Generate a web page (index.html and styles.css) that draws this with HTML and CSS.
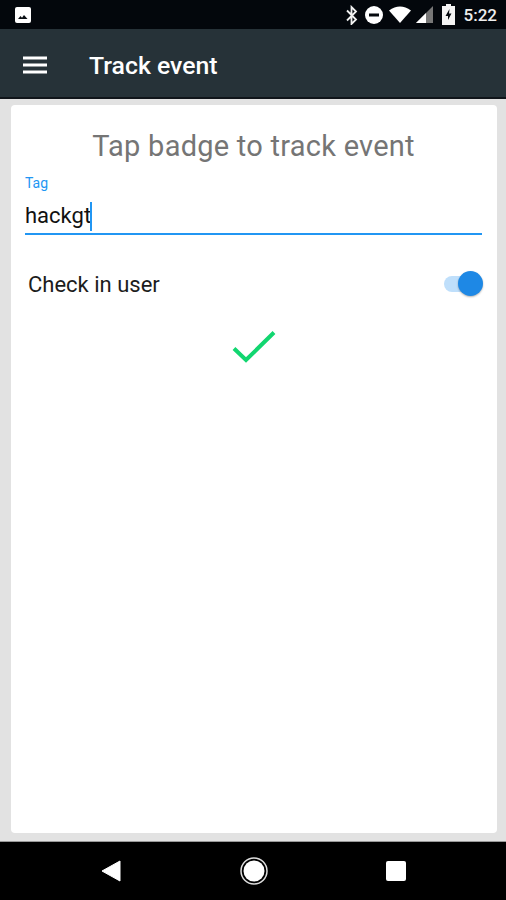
FILE: index.html
```html
<!DOCTYPE html>
<html lang="en">
<head>
<meta charset="utf-8">
<title>Track event</title>
<link rel="stylesheet" href="styles.css">
</head>
<body>
<div class="phone">
  <div class="statusbar">
    <svg class="photo-icon" width="18" height="18" viewBox="0 0 18 18"><rect x="1" y="1" width="16" height="16" rx="2" fill="#fff"/><path d="M4 13l2.5-3 1.5 1.8 2-2.8 3.5 4z" fill="#0a0f14"/></svg>
    <div class="status-right">
      <svg width="14" height="20" viewBox="0 0 14 20"><path d="M2 5.5l9 9-4.5 4.500v-17l4.500 4.500-9 9" fill="none" stroke="#f0f0f0" stroke-width="1.800"/></svg>
      <svg width="20" height="20" viewBox="0 0 20 20"><circle cx="10" cy="10" r="9" fill="#fff"/><rect x="5" y="8.500" width="10" height="3" fill="#05090e"/></svg>
      <svg width="22" height="18" viewBox="0 0 22 18"><path d="M0 4.500Q11-3.500 22 4.500L11 17z" fill="#fff"/></svg>
      <svg width="17" height="18" viewBox="0 0 17 18"><path d="M0 17L17 0v17z" fill="#777"/><path d="M0 17L10 7v10z" fill="#fff"/></svg>
      <svg class="batt" width="13" height="21" viewBox="0 0 13 21"><path d="M4 0h5v2h4v19H0V2h4z" fill="#f4f4f4"/><path d="M7.500 5L3.500 12h2.500v4l3.500-6.500H7z" fill="#05090e"/></svg>
      <span class="clock">5:22</span>
    </div>
  </div>
  <header class="appbar">
    <svg class="menu" width="24" height="18" viewBox="0 0 24 18"><path d="M0 2h24M0 9h24M0 16h24" stroke="#fff" stroke-width="3"/></svg>
    <h1 class="title">Track event</h1>
  </header>
  <main class="content">
    <section class="card">
      <h2 class="heading">Tap badge to track event</h2>
      <div class="field">
        <label class="field-label">Tag</label>
        <div class="field-value">hackgt<span class="caret"></span></div>
      </div>
      <div class="toggle-row">
        <span class="toggle-label">Check in user</span>
        <span class="switch"><span class="track"></span><span class="thumb"></span></span>
      </div>
      <div class="check-wrap">
        <svg width="44" height="34" viewBox="0 0 44 34"><path d="M2 18.500L14 30 42 2.500" fill="none" stroke="#12d670" stroke-width="4"/></svg>
      </div>
    </section>
  </main>
  <nav class="navbar">
    <svg width="20" height="22" viewBox="0 0 20 22"><path d="M19 1v20L1 11z" fill="#fff" stroke="#fff" stroke-linejoin="round"/></svg>
    <svg width="28" height="28" viewBox="0 0 28 28"><circle cx="14" cy="14" r="13" fill="none" stroke="#ddd" stroke-width="1.500"/><circle cx="14" cy="14" r="10.500" fill="#fff"/></svg>
    <svg width="20" height="20" viewBox="0 0 20 20"><rect width="20" height="20" rx="2" fill="#fff"/></svg>
  </nav>
</div>
</body>
</html>
```
FILE: styles.css
```css
* { box-sizing: border-box; }
html, body { margin: 0; padding: 0; }
body { font-family: Roboto, "Liberation Sans", sans-serif; background: #e2e2e2; }
.phone { width: 506px; height: 900px; display: flex; flex-direction: column; overflow: hidden; }
.statusbar { height: 29px; flex: none; background: #03070c; display: flex; align-items: center; justify-content: space-between; padding: 0 9px 0 14px; }
.status-right { display: flex; align-items: center; gap: 5px; }
.batt { margin-left: 4px; }
.clock { color: #eee; font-size: 17px; font-weight: 500; margin-left: 4px; }
.appbar { height: 70px; flex: none; background: #263238; border-bottom: 2px solid #10151a; display: flex; align-items: center; padding: 4px 0 0 23px; }
.title { margin: 0 0 0 42px; color: #fff; font-size: 24.8px; font-weight: 500; }
.content { flex: 1; padding: 6px 9px 8px 11px; min-height: 0; }
.card { height: 100%; background: #fff; border-radius: 4px; padding: 22px 15px 0 14px; }
.heading { margin: 0; font-size: 29px; font-weight: 400; color: #757575; text-align: center; line-height: 38px; letter-spacing: 0.25px; }
.field { margin-top: 11px; border-bottom: 2px solid #2196f3; height: 59px; }
.field-label { display: block; color: #2196f3; font-size: 14px; line-height: 15px; }
.field-value { font-size: 22px; line-height: 30px; margin-top: 10px; color: #111; display: flex; align-items: center; }
.caret { width: 2px; height: 29px; background: #2196f3; margin-left: -1px; }
.toggle-row { display: flex; align-items: center; justify-content: space-between; margin-top: 29px; padding-left: 3px; height: 40px; }
.toggle-label { font-size: 22px; color: #1c1c1c; }
.switch { position: relative; width: 39px; height: 26px; display: block; margin-right: -1px; }
.track { position: absolute; left: 0; top: 5px; width: 36px; height: 16px; border-radius: 8px; background: #bfdffb; }
.thumb { position: absolute; right: 0; top: 0; width: 25px; height: 25px; border-radius: 50%; background: #1e88e5; box-shadow: 0 1px 2px rgba(0,0,0,.3); }
.check-wrap { display: flex; justify-content: center; margin-top: 26px; }
.navbar { height: 59px; flex: none; background: #000; border-top: 1px solid #999; display: flex; align-items: center; padding: 0 100px 0 101px; justify-content: space-between; }
```
